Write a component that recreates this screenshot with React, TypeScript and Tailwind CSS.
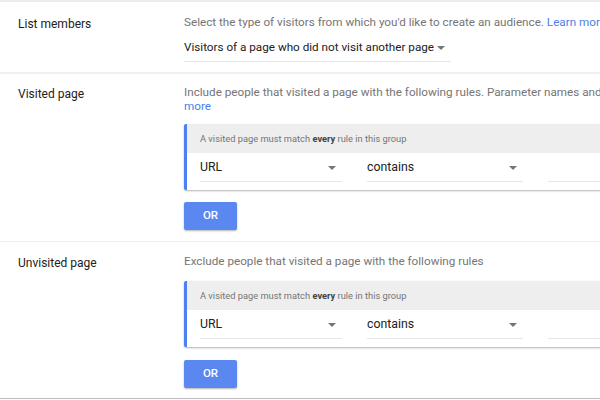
import React from "react"

function Arrow() {
  return (
    <svg width="8" height="4" viewBox="0 0 8 4" className="shrink-0">
      <path d="M0 0h8L4 4z" fill="#757575" />
    </svg>
  )
}

function Field({ value, width, arrow = true }: { value: string; width: string; arrow?: boolean }) {
  return (
    <div className={`${width} shrink-0 flex items-center justify-between h-[28px] border-b border-[#e6e6e6] pr-[6px]`}>
      <span className="text-[12.3px] text-[#212121]">{value}</span>
      {arrow && <Arrow />}
    </div>
  )
}

function RuleGroup() {
  return (
    <div className="w-[460px] border-l-[3px] border-[#4d80f0] rounded-[2px] shadow-[0_1px_2px_rgba(0,0,0,0.3)] bg-white">
      <div className="h-[29px] bg-[#eeeeee] flex items-center pl-[13px] text-[9.3px] text-[#757575]">
        <span>
          A visited page must match <b className="font-bold text-[#444]">every</b> rule in this group
        </span>
      </div>
      <div className="h-[37px] flex items-start pt-[1px] pl-[13px]">
        <Field value="URL" width="w-[142px]" />
        <div className="w-px h-[20px] bg-[#e6e6e6] mt-[8px] ml-[12px] mr-[13px]" />
        <Field value="contains" width="w-[156px]" />
        <div className="w-px h-[20px] bg-[#e6e6e6] mt-[8px] ml-[12px] mr-[13px]" />
        <Field value="" width="w-[120px]" arrow={false} />
      </div>
    </div>
  )
}

function OrButton() {
  return (
    <button className="w-[53px] h-[28px] rounded-[2px] bg-[#5a88f0] text-white text-[11.5px] font-medium shadow-[0_1px_2px_rgba(0,0,0,0.3)]">
      OR
    </button>
  )
}

export default function App() {
  return (
    <div className="w-[600px] h-[400px] overflow-hidden bg-white text-[#212121]" style={{ fontFamily: "Roboto, 'Noto Sans', sans-serif" }}>
      <div className="h-[2px] bg-[#ececec]" />

      {/* List members */}
      <div className="flex h-[70px]">
        <div className="w-[184px] shrink-0 pl-[18px] pt-[13px] text-[12px]">List members</div>
        <div className="pt-[12px] whitespace-nowrap">
          <div className="text-[11.7px] leading-[16px] text-[#757575]">
            Select the type of visitors from which you'd like to create an audience.{" "}
            <span className="text-[#4a7fe8]">Learn more</span>
          </div>
          <div className="mt-[4px] w-[267px] h-[28px] flex items-center justify-between border-b border-[#e6e6e6] pr-[6px]">
            <span className="text-[11.7px]">Visitors of a page who did not visit another page</span>
            <Arrow />
          </div>
        </div>
      </div>
      <div className="h-[2px] bg-[#f0f0f0]" />

      {/* Visited page */}
      <div className="flex h-[168px] border-b border-[#eeeeee]">
        <div className="w-[184px] shrink-0 pl-[18px] pt-[11px] text-[12px]">Visited page</div>
        <div className="pt-[11px] whitespace-nowrap">
          <div className="text-[11.7px] leading-[14px] text-[#757575]">
            Include people that visited a page with the following rules. Parameter names and
            <br />
            <span className="text-[#4a7fe8]">more</span>
          </div>
          <div className="mt-[11px]">
            <RuleGroup />
          </div>
          <div className="mt-[12px]">
            <OrButton />
          </div>
        </div>
      </div>

      {/* Unvisited page */}
      <div className="flex h-[157px] border-b border-[#bdbdbd]">
        <div className="w-[184px] shrink-0 pl-[18px] pt-[12px] text-[12px]">Unvisited page</div>
        <div className="pt-[12px] whitespace-nowrap">
          <div className="text-[11.7px] leading-[14px] text-[#757575]">
            Exclude people that visited a page with the following rules
          </div>
          <div className="mt-[13px]">
            <RuleGroup />
          </div>
          <div className="mt-[13px]">
            <OrButton />
          </div>
        </div>
      </div>
    </div>
  )
}
